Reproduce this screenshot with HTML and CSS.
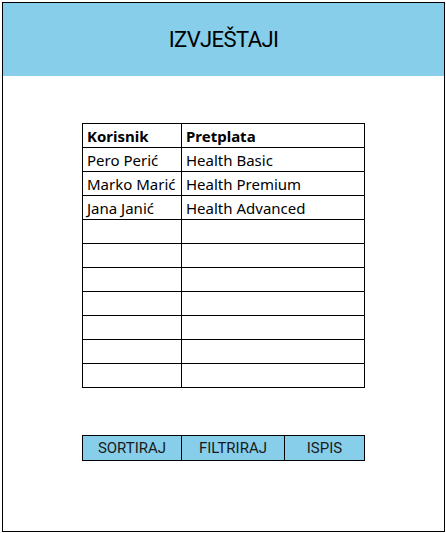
FILE: index.html
```html
<!DOCTYPE html>
<html lang="hr">
<head>
    <meta charset="UTF-8">
    <meta name="viewport" content="width=device-width, initial-scale=1.0">
    <title>Izvještaji</title>
    <link rel="stylesheet" href="styles.css">
</head>
<body>
    <div class="frame">
        <header class="top">
            <h1>IZVJEŠTAJI</h1>
        </header>

        <main class="content">
            <table class="report">
                <thead>
                    <tr>
                        <th>Korisnik</th>
                        <th>Pretplata</th>
                    </tr>
                </thead>
                <tbody>
                    <tr><td>Pero Perić</td><td>Health Basic</td></tr>
                    <tr><td>Marko Marić</td><td>Health Premium</td></tr>
                    <tr><td>Jana Janić</td><td>Health Advanced</td></tr>
                    <tr><td></td><td></td></tr>
                    <tr><td></td><td></td></tr>
                    <tr><td></td><td></td></tr>
                    <tr><td></td><td></td></tr>
                    <tr><td></td><td></td></tr>
                    <tr><td></td><td></td></tr>
                    <tr><td></td><td></td></tr>
                </tbody>
            </table>

            <div class="actions">
                <button class="sort">SORTIRAJ</button>
                <button class="filter">FILTRIRAJ</button>
                <button class="print">ISPIS</button>
            </div>
        </main>
    </div>
</body>
</html>
```

FILE: styles.css
```css
body{
    margin: 0;
    padding: 2px;
    background-color: #fff;
}

.frame{
    width: 443px;
    height: 530px;
    box-sizing: border-box;
    border: 1.5px solid #000;
    display: flex;
    flex-direction: column;
}

.top{
    height: 73px;
    background-color: #87ceeb;
    display: flex;
    justify-content: center;
    align-items: center;

    h1{
        margin: 0;
        font-family: Roboto, sans-serif;
        font-weight: 400;
        font-size: 22px;
        letter-spacing: -0.6px;
        color: #000;
    }
}

.content{
    padding-top: 47px;
    display: flex;
    flex-direction: column;
    align-items: center;
}

.report{
    width: 283px;
    border-collapse: collapse;
    font-family: "Noto Sans", sans-serif;
    font-size: 15px;
    color: #000;

    th, td{
        border: 1px solid #000;
        height: 21px;
        padding: 2px 4px 0;
        text-align: left;
        line-height: 1;
    }

    th{
        font-weight: 700;
    }

    th:first-child, td:first-child{
        width: 90px;
    }
}

.actions{
    margin-top: 47px;
    width: 283px;
    display: flex;
    border: 1px solid #000;
    box-sizing: border-box;

    button{
        height: 24px;
        border: 0;
        border-right: 1px solid #000;
        background-color: #87ceeb;
        font-family: Roboto, sans-serif;
        font-size: 15px;
        color: #1a1a1a;
        padding: 0;
        cursor: pointer;
    }

    button:last-child{
        border-right: 0;
    }

    .sort{
        width: 99px;
    }

    .filter{
        width: 103px;
    }

    .print{
        flex-grow: 1;
    }
}
```
